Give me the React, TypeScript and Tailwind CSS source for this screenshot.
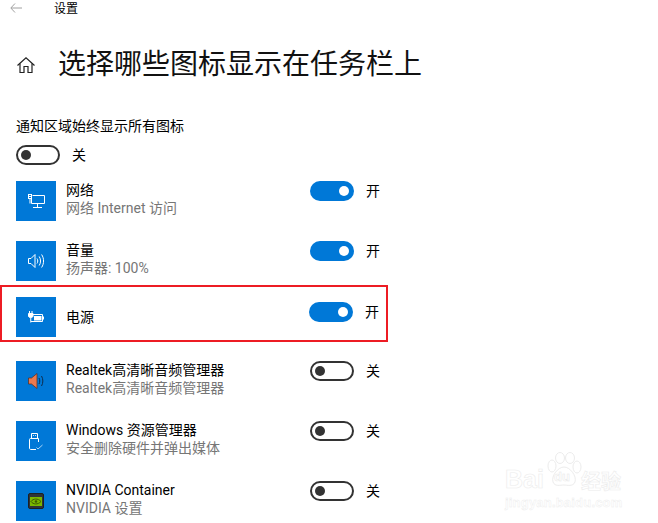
import React from 'react';

const FONT = "font-['Roboto','Noto_Sans_CJK_SC',sans-serif]";

function Toggle({ on }: { on: boolean }) {
    if (on) {
        return (
            <div className="flex items-center justify-end w-11 h-5 rounded-full bg-[#0078d7] pr-[5px]">
                <div className="w-2.5 h-2.5 rounded-full bg-white" />
            </div>
        );
    }
    return (
        <div className="flex items-center w-11 h-5 rounded-full border-2 border-[#333333] pl-[3px]">
            <div className="w-2.5 h-2.5 rounded-full bg-[#333333]" />
        </div>
    );
}

const NetworkIcon = () => (
    <svg width="17" height="14" viewBox="0 0 17 14" fill="none" stroke="white" strokeWidth="1">
        <path d="M4.5 1.5H16.5V9.5H3.5V5" />
        <rect x="0.5" y="0.5" width="3" height="4" />
        <path d="M1 2.5H3" />
        <path d="M2 4.5V9.5" />
        <path d="M9.5 9.5V13M5 13.5H14" />
    </svg>
);

const VolumeIcon = () => (
    <svg width="17" height="16" viewBox="0 0 17 16" fill="none" stroke="white" strokeWidth="1">
        <path d="M0.5 5.5H3L7 1.5V14.5L3 10.5H0.5Z" />
        <path d="M9 5.5C10 7 10 9 9 10.5" />
        <path d="M11.2 3.5C13 6 13 10 11.2 12.5" />
        <path d="M13.6 1.5C16.2 5.5 16.2 10.5 13.6 14.5" />
    </svg>
);

const PowerIcon = () => (
    <svg width="16" height="12" viewBox="0 0 16 12" fill="none" stroke="white" strokeWidth="1">
        <path d="M1.5 0V2M4 0V2" />
        <path d="M0.5 2.5H5V5C5 6 4 6.5 2.75 6.5C1.5 6.5 0.5 6 0.5 5Z" fill="white" />
        <path d="M2.75 6.5V11.5" />
        <path d="M5 3.5H14.5V10.5H3" />
        <rect x="6" y="5" width="7.5" height="4.5" fill="white" stroke="none" />
        <path d="M15.5 5.5V8.5" />
    </svg>
);

const RealtekIcon = () => (
    <svg width="17" height="16" viewBox="0 0 17 16" fill="none">
        <path d="M0.5 5H3.5L9 0.5V15.5L3.5 11H0.5Z" fill="#ea7a50" stroke="#5a2a18" strokeWidth="0.7" />
        <path d="M11 5C12 7 12 9 11 11" stroke="#0d2c4d" strokeWidth="1" />
        <path d="M13.5 3C15.3 6 15.3 10 13.5 13" stroke="#0d2c4d" strokeWidth="1" />
    </svg>
);

const UsbIcon = () => (
    <svg width="14" height="17" viewBox="0 0 14 17" fill="none" stroke="white" strokeWidth="1">
        <path d="M2.5 5.5V0.5H8.5V5.5" />
        <path d="M4 2.5H4.8M6.2 2.5H7" />
        <path d="M1.5 5.5H9.5V9" />
        <path d="M1.5 5.5C0.8 5.5 0.5 6 0.5 6.5V15C0.5 16 1 16.5 2 16.5H7" />
        <path d="M7.5 14.5L9 16L13.5 12" stroke="#a8d4f5" />
    </svg>
);

const NvidiaIcon = () => (
    <div className="flex items-center justify-center w-4 h-4 rounded-[2px] bg-[#2f3438] border border-[#1d2023]">
        <svg width="12" height="9" viewBox="0 0 12 9">
            <rect width="12" height="9" fill="#7ab800" />
            <path d="M1 4.5C3 1.5 8 1 11 4.5C8 8 3 7.5 1 4.5Z" fill="none" stroke="#3d5c00" strokeWidth="1" />
            <circle cx="6" cy="4.5" r="1.3" fill="#3d5c00" />
        </svg>
    </div>
);

function Tile({ children }: { children: React.ReactNode }) {
    return <div className="flex items-center justify-center w-10 h-10 bg-[#0078d7] shrink-0">{children}</div>;
}

function Row({ icon, title, sub, on, className }: { icon: React.ReactNode; title: string; sub?: string; on: boolean; className?: string }) {
    return (
        <div className={`flex h-10 ${className ?? ''}`}>
            <Tile>{icon}</Tile>
            <div className={`ml-2.5 w-[244px] shrink-0 flex flex-col ${sub ? '' : 'justify-center'}`}>
                <div className="text-sm leading-[18px] text-black whitespace-nowrap">{title}</div>
                {sub && <div className="text-sm leading-[18px] text-[#767676] whitespace-nowrap">{sub}</div>}
            </div>
            <Toggle on={on} />
            <span className="ml-3 text-sm leading-5 text-black">{on ? '开' : '关'}</span>
        </div>
    );
}

export default function App() {
    return (
        <div className={`relative w-[658px] h-[523px] overflow-hidden bg-white ${FONT}`}>
            <div className="flex items-center h-4 pl-2.5">
                <svg width="12" height="10" viewBox="0 0 12 10" fill="none" stroke="#a0a0a0" strokeWidth="1">
                    <path d="M5 0.5L0.8 5L5 9.5M1 5H12" />
                </svg>
                <span className="ml-8 mt-px text-xs leading-4 text-black">设置</span>
            </div>

            <div className="flex items-center h-10 mt-[29px] pl-[17px]">
                <svg width="18" height="16" viewBox="0 0 18 16" fill="none" stroke="#222222" strokeWidth="1.2">
                    <path d="M0.5 8.5L9 0.8L17.5 8.5" />
                    <path d="M3 6.5V15.5H7V9.5H11V15.5H15V6.5" />
                </svg>
                <h1 className="ml-[23px] text-[28px] leading-10 font-normal text-[#111111] whitespace-nowrap">选择哪些图标显示在任务栏上</h1>
            </div>

            <div className="pl-4 mt-8">
                <div className="text-sm leading-[18px] text-black">通知区域始终显示所有图标</div>
                <div className="flex mt-2.5">
                    <Toggle on={false} />
                    <span className="ml-3 text-sm leading-5 text-black">关</span>
                </div>
            </div>

            <div className="mt-4 pl-4">
                <Row icon={<NetworkIcon />} title="网络" sub="网络 Internet 访问" on />
                <Row className="mt-5" icon={<VolumeIcon />} title="音量" sub="扬声器: 100%" on />
            </div>

            <div className="w-[388px] h-[57px] mt-1 pl-3.5 pt-2.5 border-2 border-[#ed1c24]">
                <div className="flex h-10">
                    <Tile><PowerIcon /></Tile>
                    <div className="ml-2.5 w-[243px] shrink-0 flex flex-col justify-center">
                        <div className="text-sm leading-[18px] text-black">电源</div>
                    </div>
                    <div className="mt-[5px]"><Toggle on /></div>
                    <span className="ml-3 mt-[5px] text-sm leading-5 text-black">开</span>
                </div>
            </div>

            <div className="mt-[19px] pl-4">
                <Row icon={<RealtekIcon />} title="Realtek高清晰音频管理器" sub="Realtek高清晰音频管理器" on={false} />
                <Row className="mt-5" icon={<UsbIcon />} title="Windows 资源管理器" sub="安全删除硬件并弹出媒体" on={false} />
                <Row className="mt-5" icon={<NvidiaIcon />} title="NVIDIA Container" sub="NVIDIA 设置" on={false} />
            </div>

            {/* watermark */}
            <div className="absolute left-[505px] top-[452px] w-[120px] h-[58px] font-['Liberation_Sans',sans-serif] pointer-events-none">
                <span className="absolute left-0 top-[13px] text-[25px] leading-7 font-bold text-white [-webkit-text-stroke:0.6px_#ececec]">Bai</span>
                <svg className="absolute left-[41px] top-0" width="36" height="36" viewBox="0 0 36 36" fill="white" stroke="#ececec" strokeWidth="1">
                    <ellipse cx="6" cy="14" rx="4" ry="6" />
                    <ellipse cx="14" cy="6" rx="4.5" ry="5.5" />
                    <ellipse cx="24" cy="6" rx="4.5" ry="5.5" />
                    <ellipse cx="31" cy="15" rx="4" ry="6" />
                    <path d="M18 15C24 15 31 24 29 30C27 35 21 33 18 33C14 33 9 35 7 30C5 24 12 15 18 15Z" />
                </svg>
                <span className="absolute left-[49px] top-[17px] text-[13px] leading-4 font-bold text-white [-webkit-text-stroke:0.5px_#e8e8e8]">du</span>
                <span className="absolute left-[76px] top-[17px] text-[20px] leading-6 font-bold font-['Noto_Sans_CJK_SC',sans-serif] text-white [-webkit-text-stroke:0.6px_#ececec]">经验</span>
                <span className="absolute left-0 top-[44px] text-[13px] leading-[14px] font-bold tracking-[0.2px] text-white [-webkit-text-stroke:0.4px_#ececec] whitespace-nowrap">jingyan.baidu.com</span>
            </div>
        </div>
    );
}
